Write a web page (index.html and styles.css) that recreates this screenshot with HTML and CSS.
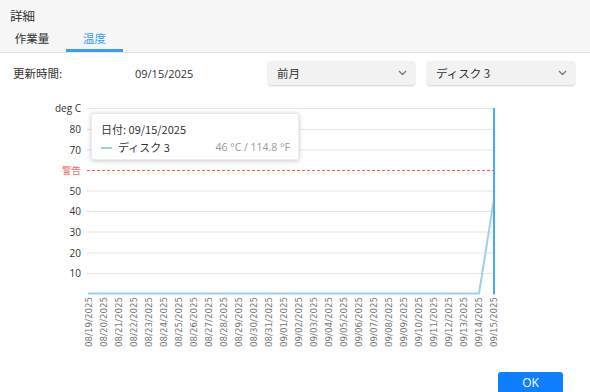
FILE: index.html
```html
<!DOCTYPE html>
<html lang="ja">
<head>
<meta charset="utf-8">
<title>詳細</title>
<link rel="stylesheet" href="styles.css">
</head>
<body>
<div class="dialog">
  <div class="top">
    <div class="title">詳細</div>
    <div class="tabs">
      <div class="tab">作業量</div>
      <div class="tab active">温度</div>
    </div>
  </div>
  <div class="controls">
    <div class="label">更新時間:</div>
    <div class="date">09/15/2025</div>
    <div class="select s1"><span>前月</span><svg class="chev" width="9" height="6" viewBox="0 0 9 6"><path d="M1 1 L4.5 4.5 L8 1" fill="none" stroke="#777" stroke-width="1.3"/></svg></div>
    <div class="select s2"><span>ディスク 3</span><svg class="chev" width="9" height="6" viewBox="0 0 9 6"><path d="M1 1 L4.5 4.5 L8 1" fill="none" stroke="#777" stroke-width="1.3"/></svg></div>
  </div>
  <div class="chart">
    <svg class="plot" width="590" height="255" viewBox="0 100 590 255">
      <g class="grid">
        <line x1="87" y1="108.5" x2="494" y2="108.5"/>
        <line x1="87" y1="129.5" x2="494" y2="129.5"/>
        <line x1="87" y1="150" x2="494" y2="150"/>
        <line x1="87" y1="191" x2="494" y2="191"/>
        <line x1="87" y1="211.5" x2="494" y2="211.5"/>
        <line x1="87" y1="232" x2="494" y2="232"/>
        <line x1="87" y1="253" x2="494" y2="253"/>
        <line x1="87" y1="273.5" x2="494" y2="273.5"/>
      </g>
      <line class="warn" x1="87" y1="170.5" x2="494" y2="170.5"/>
      <g class="ylab">
        <text x="81" y="112">deg C</text>
        <text x="81" y="133">80</text>
        <text x="81" y="154">70</text>
        <text x="81" y="174" class="warnlab">警告</text>
        <text x="81" y="195">50</text>
        <text x="81" y="215">40</text>
        <text x="81" y="236">30</text>
        <text x="81" y="257">20</text>
        <text x="81" y="277">10</text>
      </g>
      <polyline class="data" points="88,293.5 479,293.5 494,199"/>
      <line class="cursor" x1="494" y1="108" x2="494" y2="294.5"/>
      <g class="xlab">
        <text transform="translate(92,297) rotate(-90)">08/19/2025</text>
        <text transform="translate(107,297) rotate(-90)">08/20/2025</text>
        <text transform="translate(122,297) rotate(-90)">08/21/2025</text>
        <text transform="translate(137,297) rotate(-90)">08/22/2025</text>
        <text transform="translate(152,297) rotate(-90)">08/23/2025</text>
        <text transform="translate(167,297) rotate(-90)">08/24/2025</text>
        <text transform="translate(182,297) rotate(-90)">08/25/2025</text>
        <text transform="translate(197,297) rotate(-90)">08/26/2025</text>
        <text transform="translate(212,297) rotate(-90)">08/27/2025</text>
        <text transform="translate(227,297) rotate(-90)">08/28/2025</text>
        <text transform="translate(242,297) rotate(-90)">08/29/2025</text>
        <text transform="translate(257,297) rotate(-90)">08/30/2025</text>
        <text transform="translate(272,297) rotate(-90)">08/31/2025</text>
        <text transform="translate(287,297) rotate(-90)">09/01/2025</text>
        <text transform="translate(302,297) rotate(-90)">09/02/2025</text>
        <text transform="translate(317,297) rotate(-90)">09/03/2025</text>
        <text transform="translate(332,297) rotate(-90)">09/04/2025</text>
        <text transform="translate(347,297) rotate(-90)">09/05/2025</text>
        <text transform="translate(362,297) rotate(-90)">09/06/2025</text>
        <text transform="translate(377,297) rotate(-90)">09/07/2025</text>
        <text transform="translate(392,297) rotate(-90)">09/08/2025</text>
        <text transform="translate(407,297) rotate(-90)">09/09/2025</text>
        <text transform="translate(422,297) rotate(-90)">09/10/2025</text>
        <text transform="translate(437,297) rotate(-90)">09/11/2025</text>
        <text transform="translate(452,297) rotate(-90)">09/12/2025</text>
        <text transform="translate(467,297) rotate(-90)">09/13/2025</text>
        <text transform="translate(482,297) rotate(-90)">09/14/2025</text>
        <text transform="translate(497,297) rotate(-90)">09/15/2025</text>
      </g>
    </svg>
    <div class="tooltip">
      <div class="tt-date">日付: 09/15/2025</div>
      <div class="tt-row">
        <span class="tt-swatch"></span>
        <span class="tt-name">ディスク 3</span>
        <span class="tt-val">46 °C / 114.8 °F</span>
      </div>
    </div>
  </div>
  <div class="footer">
    <button class="ok">OK</button>
  </div>
</div>
</body>
</html>
```
FILE: styles.css
```css
html, body {
  margin: 0;
  padding: 0;
  width: 590px;
  height: 392px;
  overflow: hidden;
  background: #fff;
  font-family: "Noto Sans CJK JP", "Noto Sans", sans-serif;
  color: #333;
}
.dialog {
  display: flex;
  flex-direction: column;
  width: 590px;
}
.top {
  background: #f6f6f6;
  border-bottom: 1px solid #e2e2e2;
}
.title {
  height: 28px;
  line-height: 31px;
  padding-left: 10px;
  font-size: 12.5px;
  color: #333;
}
.tabs {
  display: flex;
  height: 24px;
}
.tab {
  font-size: 11.5px;
  line-height: 21px;
  color: #333;
  box-sizing: border-box;
  height: 24px;
  text-align: center;
}
.tab:first-child {
  width: 64px;
}
.tab.active {
  width: 57px;
  margin-left: 2px;
  color: #3a9ef0;
  border-bottom: 3px solid #3a9ef0;
}
.controls {
  display: flex;
  align-items: center;
  height: 24px;
  margin-top: 8px;
  font-size: 11.5px;
}
.label {
  width: 122px;
  padding-left: 13px;
}
.date {
  width: 133px;
  font-family: "Open Sans", "Noto Sans", sans-serif;
  font-size: 11px;
}
.select {
  display: flex;
  align-items: center;
  justify-content: space-between;
  box-sizing: border-box;
  height: 24px;
  padding: 0 8px 0 9px;
  background: #f2f2f2;
  border-radius: 3px;
  box-shadow: 0 1px 2px rgba(0,0,0,0.18);
  color: #333;
}
.s1 {
  width: 147px;
}
.s2 {
  width: 148px;
  margin-left: 12px;
}
.chev {
  display: block;
}
.chart {
  position: relative;
  margin-top: 15px;
  height: 255px;
}
.plot {
  display: block;
}
.grid line {
  stroke: #e4e4e4;
  stroke-width: 1;
}
.warn {
  stroke: #ff5c5c;
  stroke-width: 1;
  stroke-dasharray: 3 2;
}
.ylab text {
  font-family: "Open Sans", "Noto Sans", sans-serif;
  font-size: 10px;
  fill: #333;
  text-anchor: end;
}
.ylab .warnlab {
  fill: #f46a6a;
  font-family: "Noto Sans CJK JP", sans-serif;
  font-size: 9.5px;
}
.data {
  fill: none;
  stroke: #9fd0ea;
  stroke-width: 2;
}
.cursor {
  stroke: #45acf4;
  stroke-width: 2;
}
.xlab text {
  font-family: "DejaVu Sans", sans-serif;
  font-size: 8.7px;
  fill: #777;
  text-anchor: end;
}
.tooltip {
  position: absolute;
  left: 91px;
  top: 13px;
  width: 208px;
  height: 47px;
  box-sizing: border-box;
  background: #fff;
  border: 1px solid #ececec;
  box-shadow: 0 1px 4px rgba(0,0,0,0.22);
  border-radius: 2px;
  padding: 8px 8px 0 9px;
  font-size: 11px;
}
.tt-date {
  line-height: 15px;
  color: #333;
}
.tt-row {
  display: flex;
  align-items: center;
  margin-top: 3px;
  line-height: 15px;
}
.tt-swatch {
  width: 11px;
  height: 2px;
  background: #9fd0ea;
  margin-right: 6px;
}
.tt-name {
  flex: 1;
  color: #333;
}
.tt-val {
  color: #999;
  font-family: "Open Sans", "Noto Sans", sans-serif;
  font-size: 10.5px;
}
.footer {
  display: flex;
  justify-content: flex-end;
  padding-right: 27px;
  margin-top: 17px;
}
.ok {
  width: 65px;
  height: 28px;
  border: none;
  border-radius: 3px;
  background: #0f7fff;
  color: #fff;
  font-family: "Open Sans", "Noto Sans", sans-serif;
  font-size: 12px;
  padding: 0 0 8px 0;
}
```
